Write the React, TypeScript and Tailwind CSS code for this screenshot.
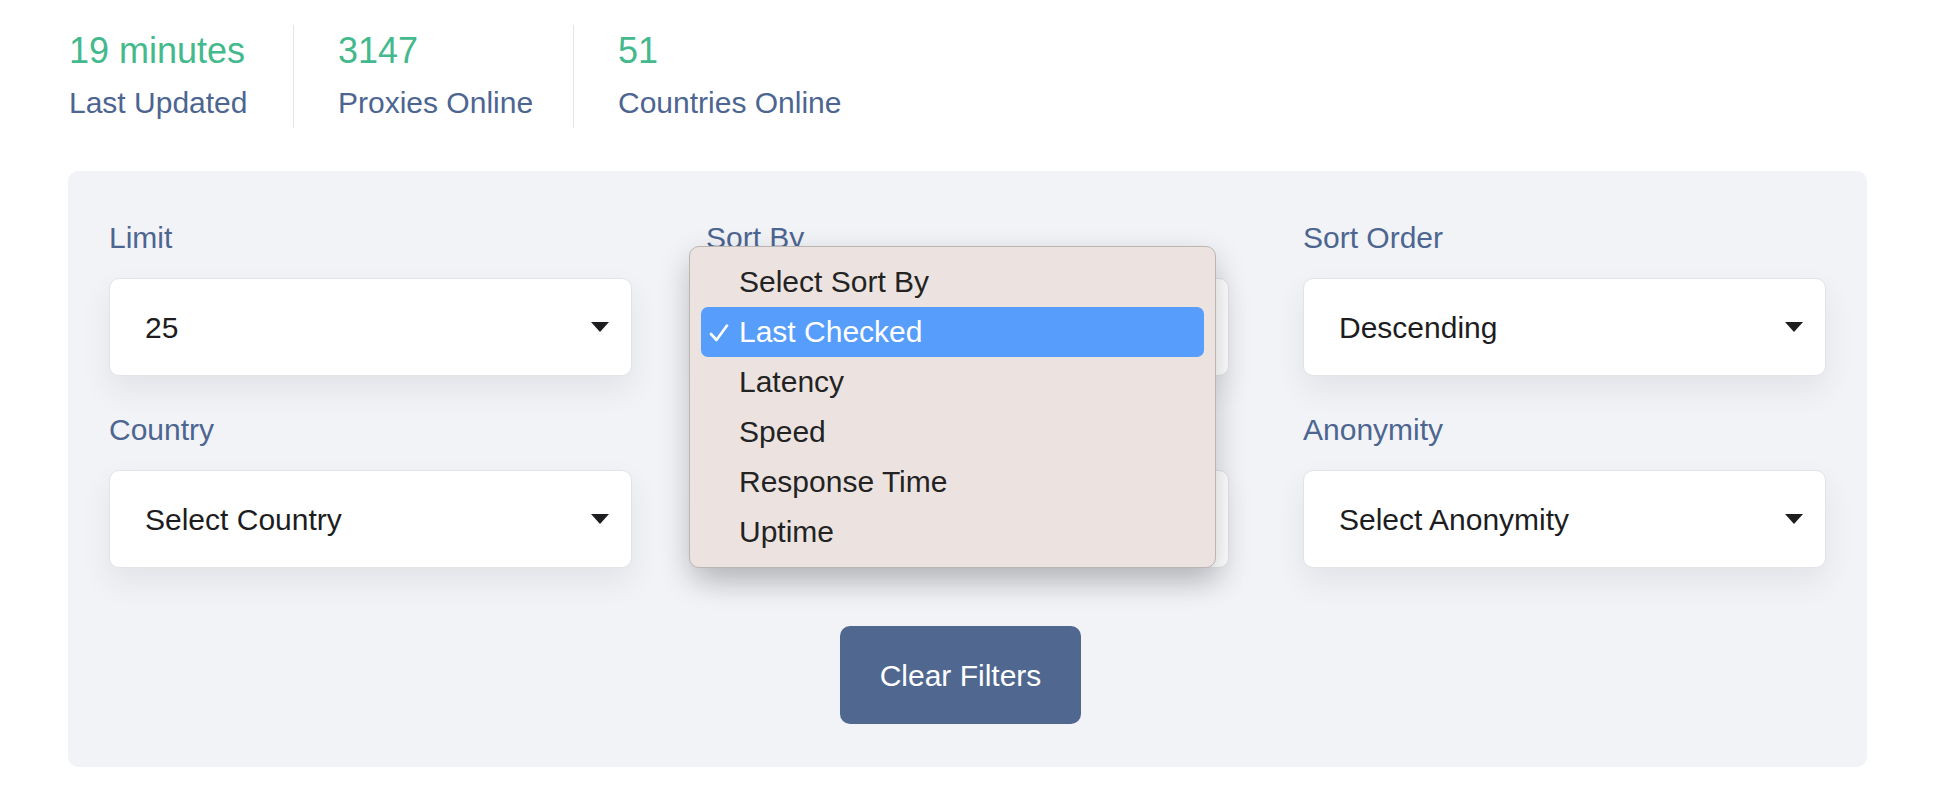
import { Fragment } from "react";

const stats = [
  { value: "19 minutes", label: "Last Updated" },
  { value: "3147", label: "Proxies Online" },
  { value: "51", label: "Countries Online" },
];

// the middle column sits under the open native menu, so its own texts are hidden
const fields = [
  { label: "Limit", value: "25" },
  { label: "Sort By", value: "", open: true },
  { label: "Sort Order", value: "Descending" },
  { label: "Country", value: "Select Country" },
  { label: "", value: "" },
  { label: "Anonymity", value: "Select Anonymity" },
];

const sortOptions = ["Select Sort By", "Last Checked", "Latency", "Speed", "Response Time", "Uptime"];

function Caret() {
  return (
    <svg width="18" height="10" viewBox="0 0 18 10" className="ml-auto shrink-0">
      <path d="M0 0 H18 L9 10 Z" fill="#1d1d1f" />
    </svg>
  );
}

function SortMenu() {
  return (
    <div className="absolute left-[-17px] top-[31px] z-10 w-[527px] rounded-[10px] border border-[#b9b5b3] bg-[#ece3e1] px-[11px] py-[10px] shadow-[0_12px_30px_rgba(0,0,0,0.22)]">
      {sortOptions.map((opt) => {
        const selected = opt === "Last Checked";
        return (
          <div
            key={opt}
            className={
              selected
                ? "relative flex h-[50px] items-center rounded-[7px] bg-[#579dfc] pl-[38px] text-[30px] leading-[50px] text-white"
                : "relative flex h-[50px] items-center pl-[38px] text-[30px] leading-[50px] text-[#232323]"
            }
          >
            {selected && (
              <svg width="20" height="18" viewBox="0 0 20 18" className="absolute left-[8px] top-[17px]">
                <path d="M2 10 L7.5 16 L18 1.5" fill="none" stroke="#fff" strokeWidth="2.6" strokeLinecap="round" strokeLinejoin="round" />
              </svg>
            )}
            {opt}
          </div>
        );
      })}
    </div>
  );
}

export default function App() {
  return (
    <div className="h-[802px] w-full bg-white font-['Liberation_Sans',Arial,sans-serif]">
      <div className="flex pl-[69px] pt-[25px]">
        {stats.map((s, i) => (
          <div
            key={s.label}
            className={
              i === 0
                ? "flex w-[224px] flex-col"
                : i === 1
                  ? "flex w-[280px] flex-col border-l border-[#e4e4e6] pl-[44px]"
                  : "flex flex-col border-l border-[#e4e4e6] pl-[44px]"
            }
          >
            <span className="text-[36px] leading-[52px] text-[#44b98d]">{s.value}</span>
            <span className="text-[30px] leading-[51px] text-[#4c6591]">{s.label}</span>
          </div>
        ))}
      </div>

      <div className="ml-[68px] mt-[43px] w-[1799px] rounded-[10px] bg-[#f2f3f6] px-[41px] pb-[43px] pt-[44px]">
        <div className="grid grid-cols-3 gap-x-[74px] gap-y-[31px]">
          {fields.map((f, i) => (
            <Fragment key={i}>
              <div className="relative">
                <div className="mb-[18px] h-[45px] text-[30px] leading-[45px] text-[#4c6591]">{f.label}</div>
                <div className="flex h-[98px] items-center rounded-[10px] border border-[#e1e3e8] bg-white pl-[35px] pr-[22px] text-[30px] text-[#1d1d1f] shadow-[0_14px_30px_rgba(40,50,80,0.08)]">
                  {f.value && <span>{f.value}</span>}
                  <Caret />
                </div>
                {f.open && <SortMenu />}
              </div>
            </Fragment>
          ))}
        </div>

        <div className="mt-[58px] flex justify-center pr-[14px]">
          <button className="h-[98px] w-[241px] rounded-[10px] bg-[#50688f] text-[30px] text-white">
            Clear Filters
          </button>
        </div>
      </div>
    </div>
  );
}
